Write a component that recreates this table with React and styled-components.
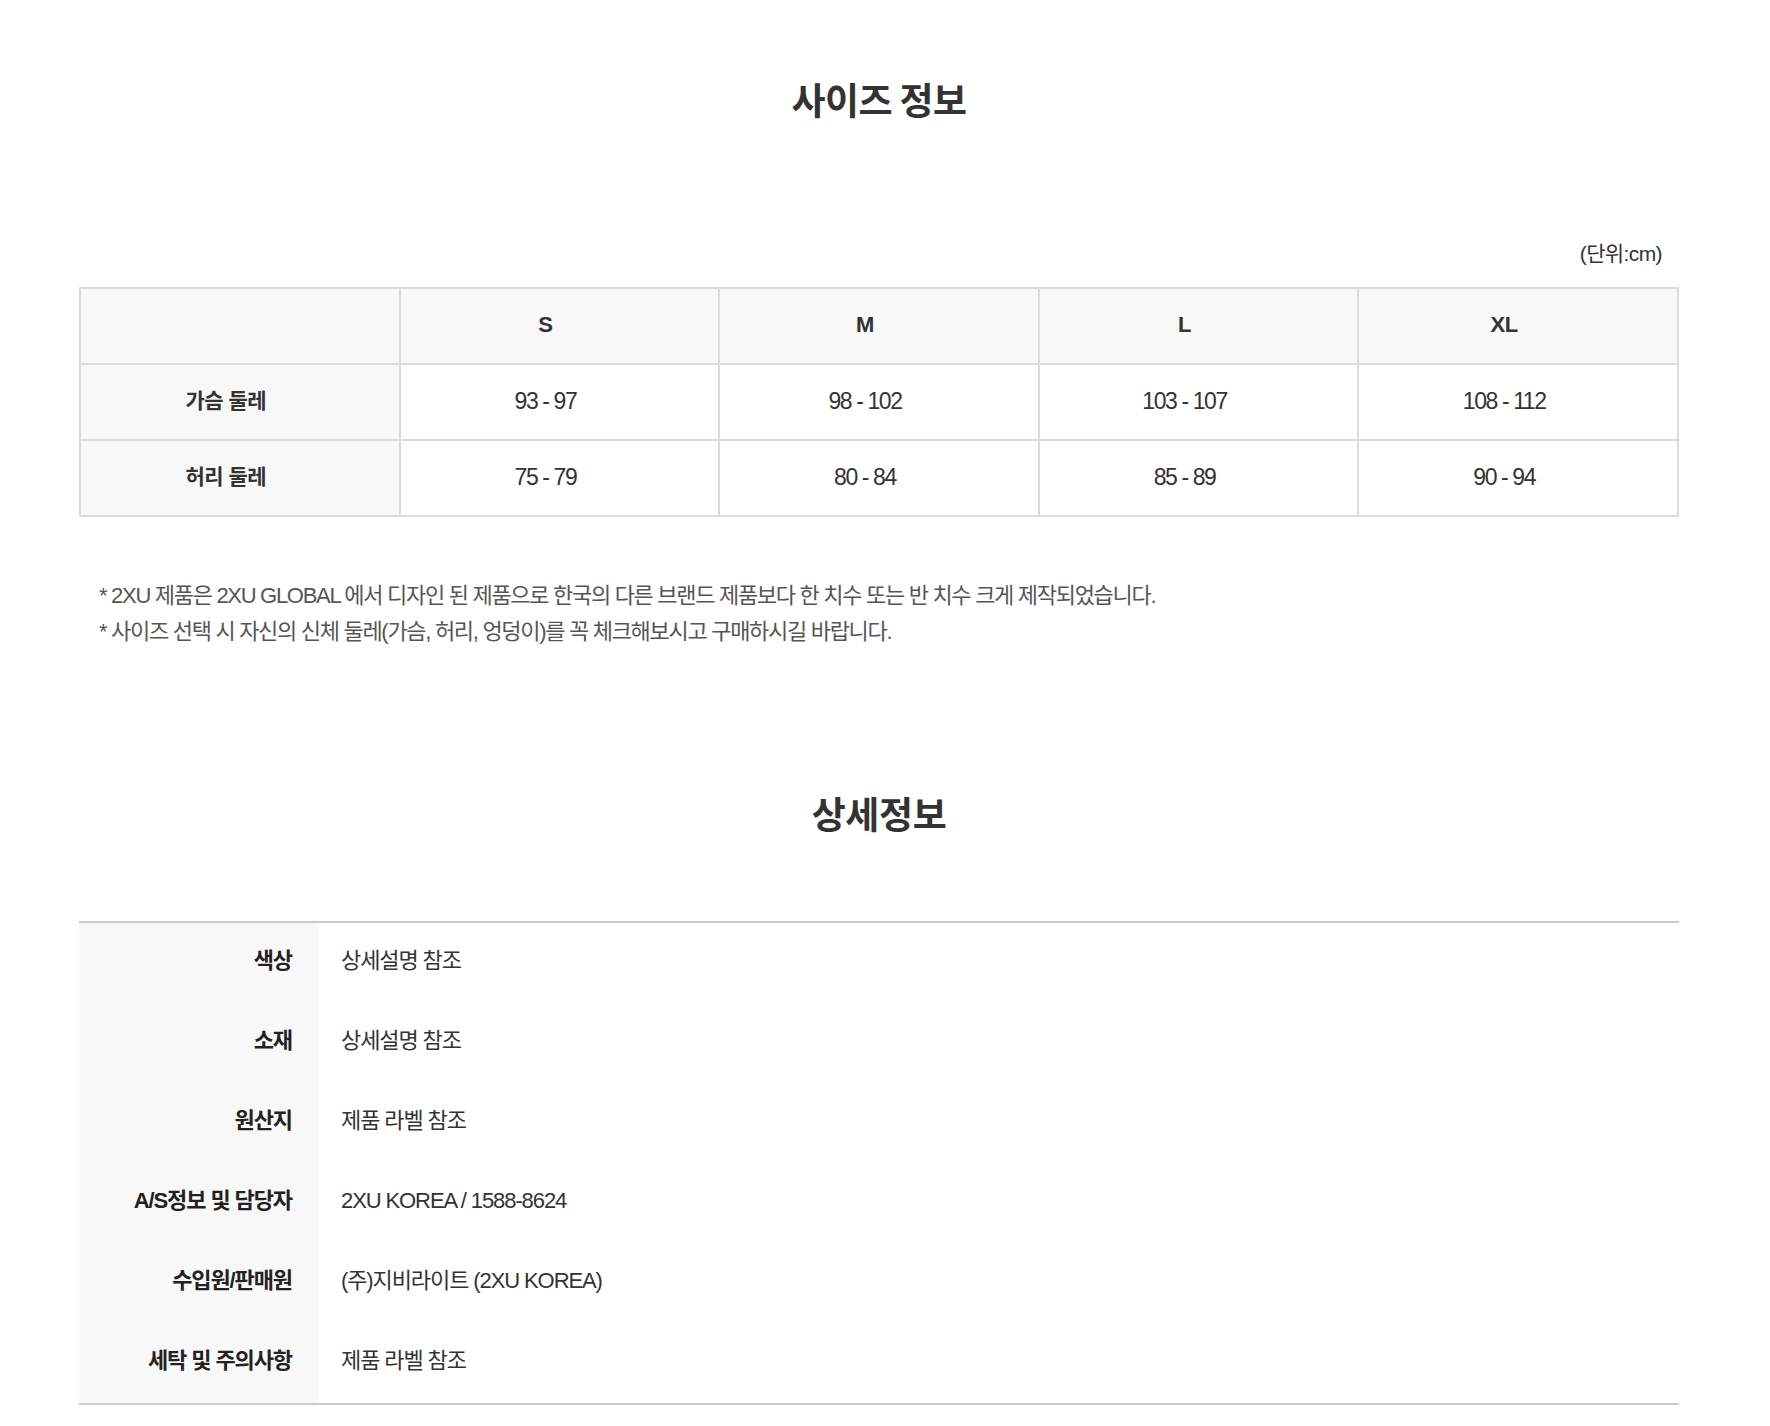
import styled, { createGlobalStyle } from "styled-components";

const GlobalStyle = createGlobalStyle`
    body {
        margin: 0;
        background: #fff;
        color: #333;
        font-family: "Liberation Sans", "Noto Sans CJK KR", sans-serif;
    }
`;

const Page = styled.div`
    width: 1600px;
    margin-left: 79px;
    padding-top: 78px;
    padding-bottom: 22px;
`;

const SectionTitle = styled.h2`
    margin: 0;
    text-align: center;
    font-family: "Noto Sans CJK KR", sans-serif;
    font-size: 37px;
    line-height: 43px;
    font-weight: 700;
    letter-spacing: ${(props) => props.spacing || "-0.6px"};
    color: #333;
`;

const Unit = styled.p`
    margin: 121px 0 21px;
    padding-right: 17px;
    text-align: right;
    font-size: 21px;
    line-height: 24px;
    letter-spacing: -0.6px;
    color: #333;
`;

const SizeTable = styled.table`
    width: 100%;
    border-collapse: collapse;
    table-layout: fixed;
    border: 2px solid #dcdcdc;
`;

const Cell = styled.td`
    height: 72px;
    padding: 0 28px 2px 0;
    border: 2px solid #dcdcdc;
    text-align: center;
    font-size: 23px;
    line-height: 26px;
    letter-spacing: -1.4px;
    font-weight: 400;
    color: #333;
    background: #fff;
`;

const HeadCell = styled(Cell).attrs({ as: "th" })`
    background: #f8f8f8;
    font-weight: 700;
    font-size: 22px;
    letter-spacing: -0.3px;
`;

const LabelCell = styled(HeadCell)`
    font-size: 21px;
    letter-spacing: -0.5px;
`;

const Notes = styled.ul`
    list-style: none;
    margin: 61px 0 142px;
    padding: 0 0 0 20px;
    font-size: 22px;
    line-height: 36px;
    letter-spacing: -1.3px;
    color: #555;
`;

const InfoTitle = styled(SectionTitle)`
    margin-bottom: 86px;
`;

const InfoTable = styled.div`
    border-top: 2px solid #cacaca;
    border-bottom: 2px solid #cacaca;
`;

const InfoRow = styled.div`
    display: grid;
    grid-template-columns: 240px 1fr;
    height: 80px;
`;

const InfoLabel = styled.div`
    background: #f8f8f8;
    padding: 26px 27px 0 0;
    text-align: right;
    font-size: 22px;
    line-height: 24px;
    font-weight: 700;
    letter-spacing: -1.1px;
    color: #222;
`;

const InfoValue = styled.div`
    padding: 26px 0 0 22px;
    font-size: 22px;
    line-height: 24px;
    letter-spacing: -1.1px;
    color: #333;
`;

const sizes = ["S", "M", "L", "XL"];

const measures = [
    { label: "가슴 둘레", values: ["93 - 97", "98 - 102", "103 - 107", "108 - 112"] },
    { label: "허리 둘레", values: ["75 - 79", "80 - 84", "85 - 89", "90 - 94"] },
];

const notes = [
    "* 2XU 제품은 2XU GLOBAL 에서 디자인 된 제품으로 한국의 다른 브랜드 제품보다 한 치수 또는 반 치수 크게 제작되었습니다.",
    "* 사이즈 선택 시 자신의 신체 둘레(가슴, 허리, 엉덩이)를 꼭 체크해보시고 구매하시길 바랍니다.",
];

const details = [
    ["색상", "상세설명 참조"],
    ["소재", "상세설명 참조"],
    ["원산지", "제품 라벨 참조"],
    ["A/S정보 및 담당자", "2XU KOREA / 1588-8624"],
    ["수입원/판매원", "(주)지비라이트 (2XU KOREA)"],
    ["세탁 및 주의사항", "제품 라벨 참조"],
];

function App() {
    return (
        <>
            <GlobalStyle />
            <Page>
                {/* Size chart */}
                <SectionTitle>사이즈 정보</SectionTitle>
                <Unit>(단위:cm)</Unit>
                <SizeTable>
                    <thead>
                        <tr>
                            <HeadCell />
                            {sizes.map((s) => (
                                <HeadCell key={s}>{s}</HeadCell>
                            ))}
                        </tr>
                    </thead>
                    <tbody>
                        {measures.map((m) => (
                            <tr key={m.label}>
                                <LabelCell>{m.label}</LabelCell>
                                {m.values.map((v) => (
                                    <Cell key={v}>{v}</Cell>
                                ))}
                            </tr>
                        ))}
                    </tbody>
                </SizeTable>
                <Notes>
                    {notes.map((n) => (
                        <li key={n}>{n}</li>
                    ))}
                </Notes>

                {/* Product details */}
                <InfoTitle spacing="-0.4px">상세정보</InfoTitle>
                <InfoTable>
                    {details.map(([label, value]) => (
                        <InfoRow key={label}>
                            <InfoLabel>{label}</InfoLabel>
                            <InfoValue>{value}</InfoValue>
                        </InfoRow>
                    ))}
                </InfoTable>
            </Page>
        </>
    );
}

export default App;
